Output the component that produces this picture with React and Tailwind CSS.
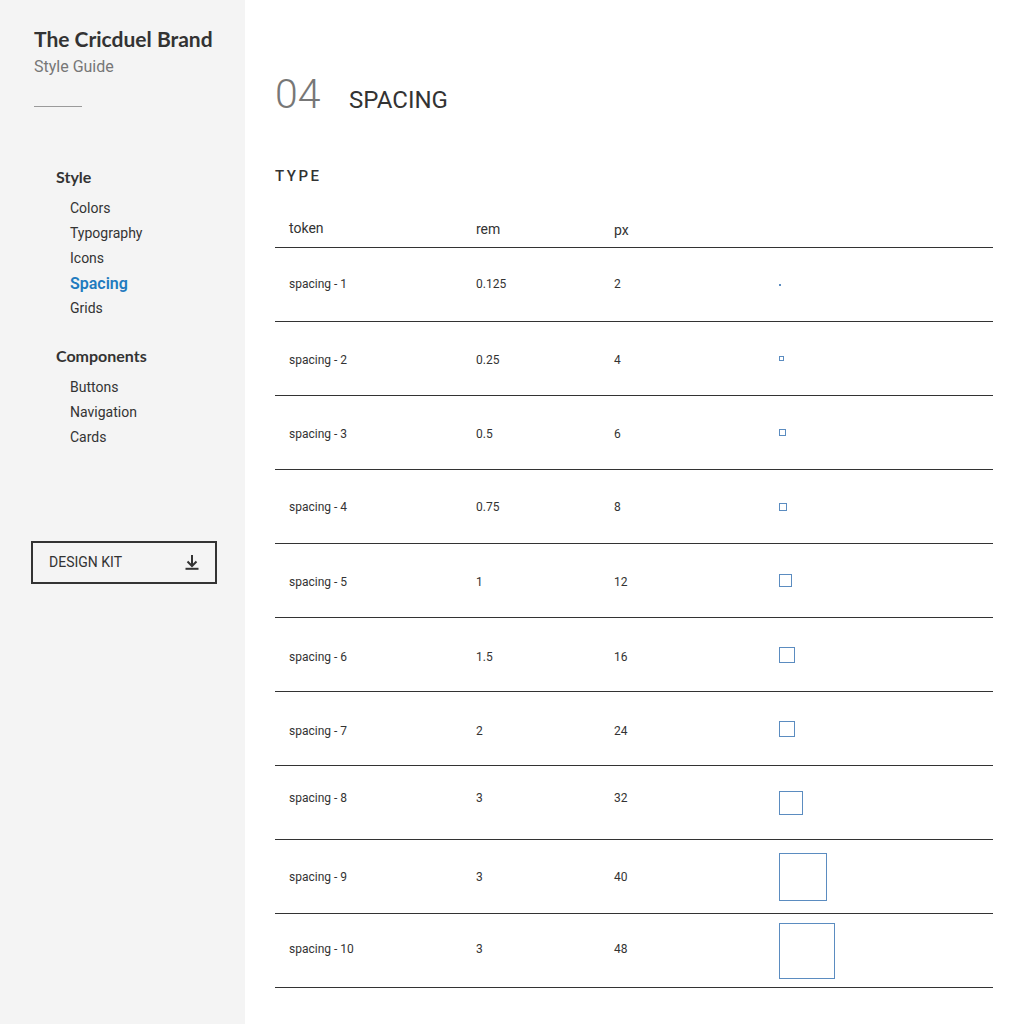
import React from "react";

const rows = [
  { t: "spacing - 1", rem: "0.125", px: "2", size: "dot", pt: "pt-[28px]" },
  { t: "spacing - 2", rem: "0.25", px: "4", size: "w-[5px] h-[5px]", pt: "pt-[30px]" },
  { t: "spacing - 3", rem: "0.5", px: "6", size: "w-[7px] h-[7px]", pt: "pt-[30px]" },
  { t: "spacing - 4", rem: "0.75", px: "8", size: "w-[8px] h-[8px]", pt: "pt-[29px]" },
  { t: "spacing - 5", rem: "1", px: "12", size: "w-[13px] h-[13px]", pt: "pt-[30px]" },
  { t: "spacing - 6", rem: "1.5", px: "16", size: "w-[16px] h-[16px]", pt: "pt-[31px]" },
  { t: "spacing - 7", rem: "2", px: "24", size: "w-[16px] h-[16px]", pt: "pt-[31px]" },
  { t: "spacing - 8", rem: "3", px: "32", size: "w-[24px] h-[24px]", pt: "pt-[24px]" },
  { t: "spacing - 9", rem: "3", px: "40", size: "w-[48px] h-[48px]", pt: "pt-[29px]" },
  { t: "spacing - 10", rem: "3", px: "48", size: "w-[56px] h-[56px]", pt: "pt-[27px]" },
];

function NavItem({ children, active }) {
  return (
    <div
      className={
        active
          ? "h-[25px] leading-[25px] text-[16px] font-semibold text-[#1f7bbf]"
          : "h-[25px] leading-[25px] text-[14px] text-[#333]"
      }
    >
      {children}
    </div>
  );
}

function DownloadIcon() {
  return (
    <svg width="14" height="15" viewBox="0 0 14 15" className="block">
      <line x1="7" y1="0" x2="7" y2="11" stroke="#333" strokeWidth="2" />
      <polyline points="2.5,6.5 7,11 11.5,6.5" fill="none" stroke="#333" strokeWidth="2" />
      <rect x="0.5" y="12.8" width="13" height="2" fill="#333" />
    </svg>
  );
}

export default function App() {
  return (
    <div className="flex min-h-[1024px] w-full font-['Roboto',sans-serif] text-[#333]">
      <aside className="w-[245px] shrink-0 bg-[#f4f4f4] pl-[34px] pt-[27px]">
        <div className="font-['Lato',sans-serif] font-bold text-[21px] leading-[24px] text-[#333]">
          The Cricduel Brand
        </div>
        <div className="mt-[6px] text-[16px] leading-[20px] text-[#777]">Style Guide</div>
        <div className="mt-[29px] w-[48px] h-px bg-[#9a9a9a]" />

        <div className="pl-[22px]">
          <div className="mt-[60px] font-['Lato',sans-serif] font-bold text-[16px] leading-[20px] text-[#333]">
            Style
          </div>
          <div className="mt-[9px] pl-[14px]">
            <NavItem>Colors</NavItem>
            <NavItem>Typography</NavItem>
            <NavItem>Icons</NavItem>
            <NavItem active>Spacing</NavItem>
            <NavItem>Grids</NavItem>
          </div>
          <div className="mt-[25px] font-['Lato',sans-serif] font-bold text-[16px] leading-[20px] text-[#333]">
            Components
          </div>
          <div className="mt-[9px] pl-[14px]">
            <NavItem>Buttons</NavItem>
            <NavItem>Navigation</NavItem>
            <NavItem>Cards</NavItem>
          </div>
        </div>

        <button className="mt-[91px] -ml-[3px] w-[186px] h-[43px] border-2 border-[#333] flex items-center justify-between pl-[16px] pr-[16px] text-[14px] text-[#333]">
          <span>DESIGN KIT</span>
          <DownloadIcon />
        </button>
      </aside>

      <main className="flex-1 pl-[30px] pr-[31px] pt-[70px] bg-white">
        <div className="flex items-baseline">
          <div className="w-[74px] text-[41px] leading-[48px] font-light text-[#777]">04</div>
          <div className="text-[24px] leading-[48px] text-[#333]">SPACING</div>
        </div>

        <div className="mt-[42px] text-[15px] leading-[20px] font-medium tracking-[2.5px] text-[#333]">
          TYPE
        </div>

        <div className="mt-[22px]">
          <div className="grid grid-cols-[201px_138px_165px_1fr] h-[39px] items-center border-b border-[#333] text-[14px] leading-[20px] text-[#333] box-content">
            <div className="pl-[14px]">token</div>
            <div className="pt-[2px]">rem</div>
            <div className="pt-[4px]">px</div>
            <div />
          </div>
          {rows.map((r) => (
            <div
              key={r.t}
              className="grid grid-cols-[201px_138px_165px_1fr] h-[73px] border-b border-[#333] text-[12px] leading-[16px] text-[#333] box-content"
            >
              <div className={"pl-[14px] " + r.pt}>{r.t}</div>
              <div className={r.pt}>{r.rem}</div>
              <div className={r.pt}>{r.px}</div>
              <div className="flex items-center">
                {r.size === "dot" ? (
                  <div className="w-[2px] h-[2px] bg-[#5b8cc0]" />
                ) : (
                  <div className={"border border-[#5b8cc0] " + r.size} />
                )}
              </div>
            </div>
          ))}
        </div>
      </main>
    </div>
  );
}
